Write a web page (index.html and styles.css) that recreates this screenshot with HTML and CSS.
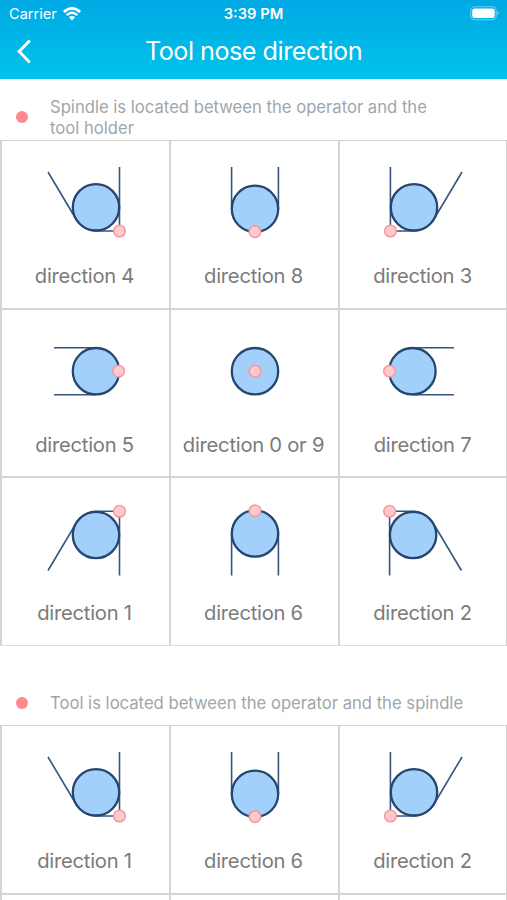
FILE: index.html
```html
<!DOCTYPE html>
<html lang="en">
<head>
<meta charset="utf-8">
<title>Tool nose direction</title>
<link rel="stylesheet" href="styles.css">
</head>
<body>
<svg class="defs" width="0" height="0">
  <symbol id="down-right" viewBox="0 0 169 120"><path d="M48 32 73 74Q83 91 96 91H119.5V27"/><circle class="nose" cx="96" cy="67.3" r="23.2"/><circle class="tip" cx="119.5" cy="91" r="5.8"/></symbol>
  <symbol id="down" viewBox="0 0 169 120"><path d="M62.6 27V69M109.4 27V69"/><circle class="nose" cx="86" cy="68.9" r="23.2"/><circle class="tip" cx="86" cy="91.7" r="5.8"/></symbol>
  <symbol id="down-left" viewBox="0 0 169 120"><path d="M124 32 99 74Q89 91 76 91H52.4V27"/><circle class="nose" cx="76" cy="67.3" r="23.2"/><circle class="tip" cx="52.4" cy="91" r="5.8"/></symbol>
  <symbol id="right" viewBox="0 0 169 120"><path d="M54 39.7H96M54 86.7H96"/><circle class="nose" cx="96" cy="63.2" r="23.2"/><circle class="tip" cx="118.6" cy="63.2" r="5.8"/></symbol>
  <symbol id="center" viewBox="0 0 169 120"><circle class="nose" cx="86" cy="63.2" r="23.2"/><circle class="tip" cx="86" cy="63.2" r="5.8"/></symbol>
  <symbol id="left" viewBox="0 0 169 120"><path d="M116 39.7H74M116 86.7H74"/><circle class="nose" cx="74.4" cy="63.2" r="23.2"/><circle class="tip" cx="51.6" cy="63.2" r="5.8"/></symbol>
  <symbol id="up-right" viewBox="0 0 169 120"><path d="M48 94.5 73 52.5Q83 35.3 96 35.3H119.5V99.5"/><circle class="nose" cx="96" cy="59" r="23.2"/><circle class="tip" cx="119.5" cy="35.3" r="5.8"/></symbol>
  <symbol id="up" viewBox="0 0 169 120"><path d="M62.6 99.5V57M109.4 99.5V57"/><circle class="nose" cx="86" cy="57.5" r="23.2"/><circle class="tip" cx="86" cy="34.7" r="5.8"/></symbol>
  <symbol id="up-left" viewBox="0 0 169 120"><path d="M123.4 94.5 98.4 52.5Q88 35.3 75 35.3H51.6V99.5"/><circle class="nose" cx="75.1" cy="59" r="23.2"/><circle class="tip" cx="51.6" cy="35.3" r="5.8"/></symbol>
</svg>
<header class="header">
  <div class="status">
    <div class="carrier"><span>Carrier</span>
      <svg width="18" height="14" viewBox="0 0 18 14" fill="none" stroke="#fff" stroke-width="2.5"><path d="M.8 5Q9-2.3 17.2 5M3.7 8.1Q9 3.3 14.3 8.1"/><path d="M5.9 10.3Q9 7.8 12.1 10.3L9 13.6Z" fill="#fff" stroke="none"/></svg>
    </div>
    <span class="time">3:39 PM</span>
    <svg class="battery" width="30" height="15" viewBox="0 0 30 15"><rect x=".7" y=".7" width="25.5" height="13" rx="4" fill="none" stroke="#fff" stroke-opacity=".42" stroke-width="1.1"/><rect x="2.2" y="2.5" width="22.5" height="9.5" rx="2.3" fill="#fff"/><path d="M27.5 5Q30 7.2 27.5 9.4Z" fill="#fff" fill-opacity=".5"/></svg>
  </div>
  <div class="nav">
    <svg class="back" width="16" height="25" viewBox="0 0 16 25"><path d="M13.8 1.6 3.2 12.5 13.8 23.4" fill="none" stroke="#fff" stroke-width="2.9"/></svg>
    <h1>Tool nose direction</h1>
  </div>
</header>
<main>
  <div class="note first"><i class="bullet"></i><p>Spindle is located between the operator and the<br>tool holder</p></div>
  <section class="grid">
    <div class="cell"><svg><use href="#down-right"/></svg><span>direction 4</span></div>
    <div class="cell"><svg><use href="#down"/></svg><span>direction 8</span></div>
    <div class="cell"><svg><use href="#down-left"/></svg><span>direction 3</span></div>
    <div class="cell"><svg><use href="#right"/></svg><span>direction 5</span></div>
    <div class="cell"><svg><use href="#center"/></svg><span>direction 0 or 9</span></div>
    <div class="cell"><svg><use href="#left"/></svg><span>direction 7</span></div>
    <div class="cell"><svg><use href="#up-right"/></svg><span>direction 1</span></div>
    <div class="cell"><svg><use href="#up"/></svg><span>direction 6</span></div>
    <div class="cell"><svg><use href="#up-left"/></svg><span>direction 2</span></div>
  </section>
  <div class="note second"><i class="bullet"></i><p>Tool is located between the operator and the spindle</p></div>
  <section class="grid partial">
    <div class="cell"><svg><use href="#down-right"/></svg><span>direction 1</span></div>
    <div class="cell"><svg><use href="#down"/></svg><span>direction 6</span></div>
    <div class="cell"><svg><use href="#down-left"/></svg><span>direction 2</span></div>
    <div class="cell"></div>
    <div class="cell"></div>
    <div class="cell"></div>
  </section>
</main>
</body>
</html>
```
FILE: styles.css
```css
* { box-sizing: border-box; }
body {
  margin: 0;
  width: 507px;
  height: 900px;
  overflow: hidden;
  background: #fff;
  font-family: Inter, "Liberation Sans", sans-serif;
}
.defs { display: block; }
.header {
  height: 79px;
  background: linear-gradient(#00a9e4, #00c3ea);
  color: #fff;
}
.status {
  display: grid;
  grid-template-columns: 1fr auto 1fr;
  align-items: center;
  height: 27px;
  padding: 0 7px 0 9px;
}
.carrier { display: flex; align-items: center; gap: 6px; font-size: 14.6px; }
.time { margin-right: 2px; font-size: 14.7px; font-weight: 600; }
.battery { justify-self: end; }
.nav {
  display: grid;
  grid-template-columns: 40px 1fr 40px;
  align-items: center;
  height: 49px;
}
.back { margin-left: 16px; }
h1 {
  margin: 0;
  padding-bottom: 2px;
  text-align: center;
  font-size: 25.2px;
  line-height: 30px;
  font-weight: 400;
  letter-spacing: -0.5px;
}
.note {
  display: flex;
  align-items: center;
  padding-left: 16px;
  color: #a0a6aa;
  font-size: 16.65px;
  line-height: 20.5px;
}
.note p { margin: 0 0 0 22px; white-space: nowrap; }
.bullet { width: 12px; height: 12px; border-radius: 50%; background: #ff8790; }
.first { height: 61px; padding-top: 16px; }
.first .bullet { transform: translateY(-1px); }
.second { height: 79px; padding-top: 35px; }
.grid {
  display: grid;
  grid-template-columns: 169px 169px 169px;
  grid-template-rows: 168px 168px 169px;
  border-right: 1px solid #d0d0d0;
  border-bottom: 1px solid #dcdcdc;
  width: 507px;
}
.partial { grid-template-rows: 168px 7px; border-bottom: 0; }
.cell {
  border-left: 2px solid #d4d4d4;
  border-top: 2px solid #d4d4d4;
  display: flex;
  flex-direction: column;
  align-items: center;
}
.cell:nth-child(-n+3) { border-top: 1px solid #d0d0d0; padding-top: 1px; }
.cell svg {
  display: block;
  flex: none;
  width: 169px;
  height: 120px;
  margin: -2px 0 0 -2px;
  fill: none;
  stroke: #365680;
  stroke-width: 1.6;
}
.nose { fill: #a2d0fb; stroke: #24466f; stroke-width: 2.3; }
.tip { fill: #ffcacc; stroke: #f896a2; stroke-width: 1.5; }
.cell span {
  margin: 4px 2px 0 0;
  color: #7b7b7b;
  font-size: 20.2px;
  line-height: 24px;
  letter-spacing: -0.25px;
  white-space: nowrap;
}
.cell:nth-child(n+4) span { margin-top: 5px; }
```
